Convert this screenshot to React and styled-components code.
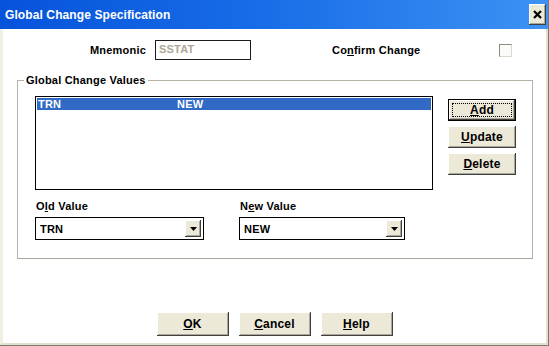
import React from "react";
import styled, { createGlobalStyle } from "styled-components";

const GlobalStyle = createGlobalStyle`
  html, body {
    margin: 0;
    padding: 0;
    background: #ffffff;
  }
  body {
    font-family: "Liberation Sans", Arial, sans-serif;
  }
`;

const Window = styled.div`
  width: 549px;
  height: 346px;
  box-sizing: border-box;
  display: flex;
  flex-direction: column;
  background: #ffffff;
  border-right: 1px solid #7a786c;
  border-bottom: 1px solid #7a786c;
`;

const TitleBar = styled.div`
  height: 29px;
  flex: none;
  display: flex;
  align-items: center;
  justify-content: space-between;
  padding: 0 2px 0 5px;
  background: linear-gradient(to right, #0553db, #1a6ee8 50%, #3d92f3);
`;

const Title = styled.span`
  color: #ffffff;
  font-size: 12px;
  font-weight: bold;
  letter-spacing: 0.1px;
`;

const CloseButton = styled.div`
  width: 17px;
  height: 21px;
  box-sizing: border-box;
  display: flex;
  align-items: center;
  justify-content: center;
  background: #ece9d8;
  box-shadow: inset -1px -1px #404040, inset 1px 1px #ffffff,
    inset -2px -2px #aca899;
`;

const Body = styled.div`
  flex: 1;
  display: flex;
  flex-direction: column;
  border-left: 3px solid #f1efe2;
  border-right: 2px solid #e3e0d0;
  border-bottom: 2px solid #e3e0d0;
  font-size: 11px;
  font-weight: bold;
  letter-spacing: 0.2px;
  color: #000000;
`;

const TopRow = styled.div`
  display: flex;
  align-items: center;
  height: 20px;
  margin-top: 11px;
  padding-left: 87px;
`;

const Label = styled.span`
  margin-right: ${(p) => p.gap || 0}px;
  white-space: nowrap;
`;

const TextBox = styled.div`
  width: 96px;
  height: 20px;
  box-sizing: border-box;
  border: 1px solid #1c1c1c;
  padding: 2px 0 0 3px;
  color: #aca899;
  margin-right: 81px;
`;

const CheckBox = styled.div`
  width: 13px;
  height: 13px;
  box-sizing: border-box;
  margin-left: 79px;
  border-top: 1px solid #8e8c82;
  border-left: 1px solid #8e8c82;
  border-right: 1px solid #dcdad0;
  border-bottom: 1px solid #dcdad0;
  background: #fbfbf8;
`;

const Group = styled.fieldset`
  margin: 14px 13px 0 14px;
  padding: 9px 16px 18px 17px;
  min-width: 0;
  border: 1px solid #b5b3a8;
  border-bottom-color: #a8a69a;
`;

const GroupLabel = styled.legend`
  padding: 0 2px;
  margin-left: -11px;
  line-height: 13px;
`;

const ListArea = styled.div`
  display: flex;
  align-items: flex-start;
`;

const ListBox = styled.div`
  width: 398px;
  height: 94px;
  box-sizing: border-box;
  border: 1px solid #000000;
  padding: 1px;
  background: #ffffff;
`;

const ListRow = styled.div`
  display: flex;
  height: 12px;
  line-height: 12px;
  padding-left: 1px;
  background: ${(p) => (p.selected ? "#316ac5" : "transparent")};
  color: ${(p) => (p.selected ? "#ffffff" : "#000000")};
`;

const ListCell = styled.span`
  width: ${(p) => p.width}px;
`;

const SideButtons = styled.div`
  display: flex;
  flex-direction: column;
  gap: 5px;
  margin-left: 15px;
  margin-top: 3px;
`;

const Button = styled.div`
  width: ${(p) => p.width}px;
  height: ${(p) => p.height}px;
  box-sizing: border-box;
  display: flex;
  align-items: center;
  justify-content: center;
  position: relative;
  background: #ece9d8;
  font-size: 12px;
  letter-spacing: 0.2px;
  box-shadow: ${(p) =>
    p.isDefault
      ? "inset 0 0 0 1px #000000, inset -2px -2px #404040, inset 2px 2px #ffffff, inset -3px -3px #aca899"
      : "inset -1px -1px #404040, inset 1px 1px #ffffff, inset -2px -2px #aca899"};
`;

const FocusRing = styled.span`
  position: absolute;
  inset: 4px;
  border: 1px dotted #000000;
`;

const Key = styled.span`
  text-decoration: underline;
  text-underline-offset: 1px;
`;

const ValueRow = styled.div`
  display: flex;
  gap: 35px;
  margin-top: 10px;
`;

const ValueField = styled.div`
  display: flex;
  flex-direction: column;
  gap: 4px;
`;

const FieldLabel = styled.span`
  line-height: 13px;
  padding-left: 1px;
`;

const Select = styled.div`
  width: ${(p) => p.width}px;
  height: 23px;
  box-sizing: border-box;
  display: flex;
  align-items: center;
  justify-content: space-between;
  border: 1px solid #000000;
  padding: 0 2px 0 4px;
  background: #ffffff;
`;

const DropButton = styled.div`
  width: 16px;
  height: 17px;
  box-sizing: border-box;
  display: flex;
  align-items: center;
  justify-content: center;
  background: #ece9d8;
  box-shadow: inset -1px -1px #404040, inset 1px 1px #ffffff,
    inset -2px -2px #aca899;
`;

const Footer = styled.div`
  margin-top: auto;
  display: flex;
  justify-content: center;
  gap: 10px;
  padding-bottom: 7px;
`;

const Arrow = () => (
  <svg width="7" height="4" viewBox="0 0 7 4">
    <path d="M0 0h7L3.5 4z" fill="#000" />
  </svg>
);

const CloseIcon = () => (
  <svg width="9" height="9" viewBox="0 0 9 9">
    <path d="M1 1l7 7M8 1L1 8" stroke="#000" strokeWidth="2.2" />
  </svg>
);

export default function App() {
  return (
    <>
      <GlobalStyle />
      <Window>
        <TitleBar>
          <Title>Global Change Specification</Title>
          <CloseButton>
            <CloseIcon />
          </CloseButton>
        </TitleBar>
        <Body>
          <TopRow>
            <Label gap={9}>Mnemonic</Label>
            <TextBox>SSTAT</TextBox>
            <Label>
              Co<Key>n</Key>firm Change
            </Label>
            <CheckBox />
          </TopRow>

          <Group>
            <GroupLabel>Global Change Values</GroupLabel>
            <ListArea>
              <ListBox>
                <ListRow selected>
                  <ListCell width={139}>TRN</ListCell>
                  <ListCell>NEW</ListCell>
                </ListRow>
              </ListBox>
              <SideButtons>
                <Button width={68} height={22} isDefault>
                  <FocusRing />
                  <Key>A</Key>dd
                </Button>
                <Button width={68} height={22}>
                  <Key>U</Key>pdate
                </Button>
                <Button width={68} height={22}>
                  <Key>D</Key>elete
                </Button>
              </SideButtons>
            </ListArea>
            <ValueRow>
              <ValueField>
                <FieldLabel>
                  O<Key>l</Key>d Value
                </FieldLabel>
                <Select width={169}>
                  TRN
                  <DropButton>
                    <Arrow />
                  </DropButton>
                </Select>
              </ValueField>
              <ValueField>
                <FieldLabel>
                  N<Key>e</Key>w Value
                </FieldLabel>
                <Select width={166}>
                  NEW
                  <DropButton>
                    <Arrow />
                  </DropButton>
                </Select>
              </ValueField>
            </ValueRow>
          </Group>

          <Footer>
            <Button width={72} height={24}>
              <Key>O</Key>K
            </Button>
            <Button width={72} height={24}>
              <Key>C</Key>ancel
            </Button>
            <Button width={72} height={24}>
              <Key>H</Key>elp
            </Button>
          </Footer>
        </Body>
      </Window>
    </>
  );
}
